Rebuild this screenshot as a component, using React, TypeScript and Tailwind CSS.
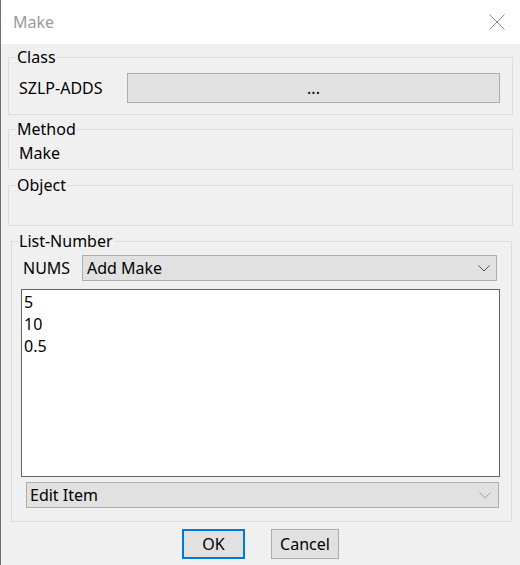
import { ReactNode } from "react";

// ─── Small parts ────────────────────────────────────────────────────────────
function Chevron({ color }: { color: string }) {
    return (
        <svg width="12" height="7" viewBox="0 0 12 7" className="shrink-0">
            <polyline points="0.5,0.5 6,6 11.5,0.5" fill="none" stroke={color} strokeWidth="1" />
        </svg>
    )
}

interface GroupProps {
    label: string
    className?: string
    legendClass?: string
    children: ReactNode
}

function Group({ label, className, legendClass, children }: GroupProps) {
    return (
        <fieldset className={`border border-[#dcdcdc] ${className ?? ""}`}>
            <legend className={`px-[1px] leading-5 ${legendClass ?? "ml-[7px]"}`}>{label}</legend>
            {children}
        </fieldset>
    )
}

// ─── Dialog ─────────────────────────────────────────────────────────────────
export default function App() {
    const items = ["5", "10", "0.5"]

    return (
        <div className="flex h-[565px] w-[520px] flex-col border-l border-[#707070] bg-[#f0f0f0] font-['Noto_Sans',sans-serif] text-[16px] text-black">
            {/* title bar */}
            <div className="flex h-[44px] shrink-0 items-center justify-between bg-white pl-[12px] pr-[15px]">
                <span className="text-[16px] text-[#9a9a9a]">Make</span>
                <svg width="16" height="16" viewBox="0 0 16 16">
                    <path d="M0.5 0.5 L15.5 15.5 M15.5 0.5 L0.5 15.5" stroke="#8a8a8a" strokeWidth="1" />
                </svg>
            </div>

            {/* body */}
            <div className="flex flex-1 flex-col px-[7px] pt-[3px]">
                <Group label="Class">
                    <div className="flex items-center pl-[10px] pr-[12px] pt-[6px] pb-[11px]">
                        <span className="w-[108px] shrink-0 leading-5">SZLP-ADDS</span>
                        <button className="h-[30px] flex-1 border border-[#adadad] bg-[#e1e1e1] leading-5">...</button>
                    </div>
                </Group>

                <Group label="Method" className="mt-[4px]">
                    <div className="pl-[10px] pt-[4px] pb-[6px] leading-5">Make</div>
                </Group>

                <Group label="Object" className="mt-[5px]">
                    <div className="h-[30px]" />
                </Group>

                <Group label="List-Number" className="mt-[5px] ml-[3px] mr-[1px]" legendClass="ml-[6px]">
                    <div className="flex flex-col pt-[4px] pb-[13px]">
                        <div className="flex h-[26px] items-center pl-[11px] pr-[14px]">
                            <span className="w-[59px] shrink-0 leading-5">NUMS</span>
                            <div className="flex h-[26px] flex-1 items-center justify-between border border-[#adadad] bg-[#e1e1e1] pl-[4px] pr-[6px]">
                                <span className="leading-5">Add Make</span>
                                <Chevron color="#555555" />
                            </div>
                        </div>

                        <div className="mt-[8px] ml-[9px] mr-[11px] h-[188px] border border-[#646464] bg-white pl-[2px] pt-[1px]">
                            {items.map((item) => (
                                <div key={item} className="leading-[22px]">{item}</div>
                            ))}
                        </div>

                        <div className="mt-[5px] ml-[14px] mr-[12px] flex h-[26px] items-center justify-between border border-[#adadad] bg-[#e1e1e1] pl-[3px] pr-[7px]">
                            <span className="leading-5">Edit Item</span>
                            <Chevron color="#a0a0a0" />
                        </div>
                    </div>
                </Group>

                <div className="mt-[7px] flex justify-center gap-[26px]">
                    <button className="h-[30px] w-[63px] border-2 border-[#0078d7] bg-[#e1e1e1] leading-5">OK</button>
                    <button className="h-[30px] w-[68px] border border-[#adadad] bg-[#e1e1e1] leading-5">Cancel</button>
                </div>
            </div>
        </div>
    )
}
